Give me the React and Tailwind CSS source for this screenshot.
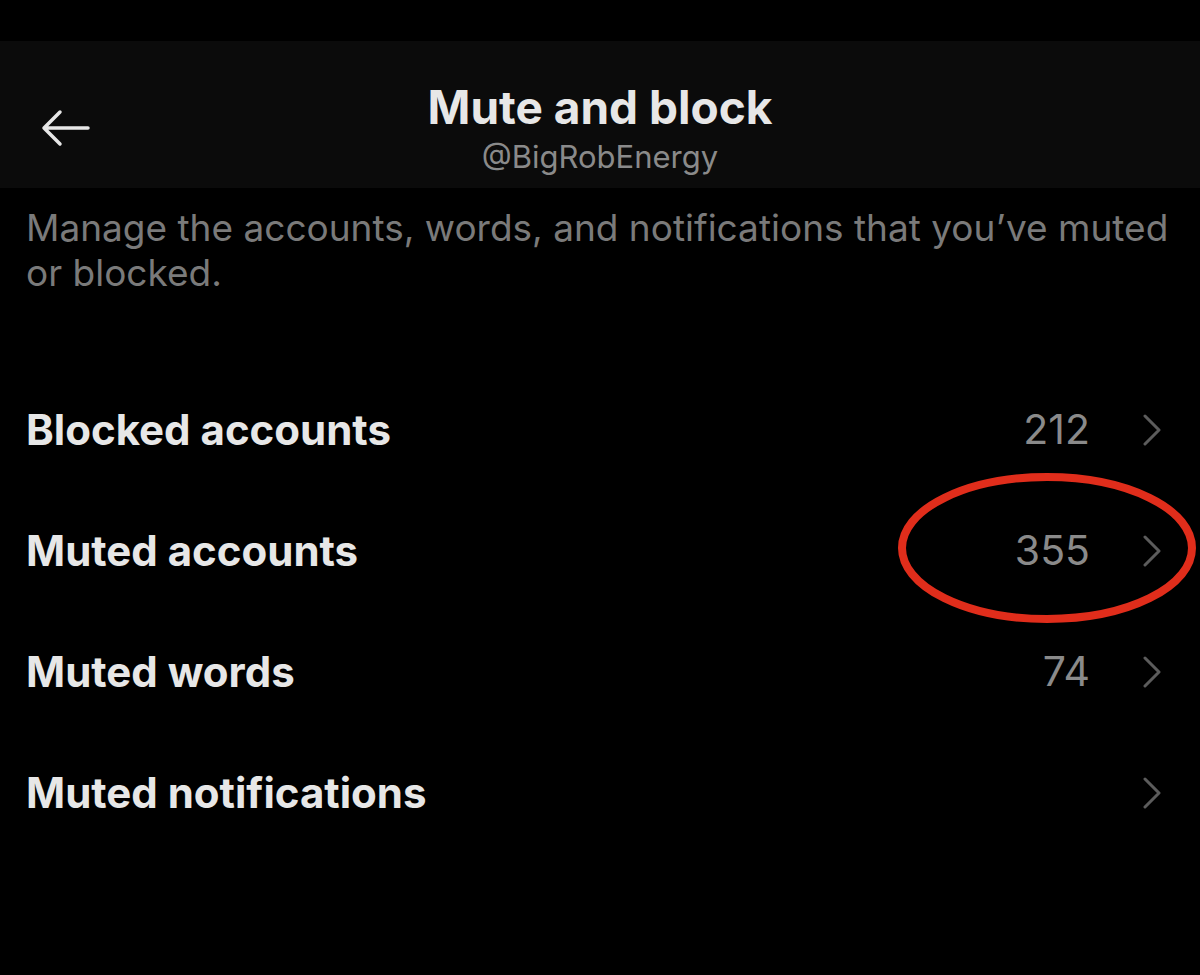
import { useState } from 'react';

const ROWS = [
  { label: 'Blocked accounts', count: '212' },
  { label: 'Muted accounts', count: '355', circled: true },
  { label: 'Muted words', count: '74' },
  { label: 'Muted notifications', count: '' },
];

function Chevron() {
  return (
    <svg width="20" height="32" viewBox="0 0 20 32" fill="none">
      <path d="M3 2 L17 16 L3 30" stroke="#5c5c5c" strokeWidth="3" strokeLinecap="round" strokeLinejoin="round" />
    </svg>
  );
}

function BackArrow() {
  return (
    <svg width="52" height="40" viewBox="0 0 52 40" fill="none">
      <path d="M48 20 H4 M20 4 L4 20 L20 36" stroke="#e7e7e7" strokeWidth="3.5" strokeLinecap="round" strokeLinejoin="round" />
    </svg>
  );
}

export default function App() {
  const [active, setActive] = useState(null);

  return (
    <div className="min-h-[975px] w-[1200px] bg-black text-[#e7e7e7] font-['Inter',sans-serif] overflow-hidden">
      <div className="h-[41px] bg-black" />
      <header className="relative h-[147px] bg-[#0b0b0b] flex flex-col items-center">
        <button className="absolute left-[40px] top-[67px]">
          <BackArrow />
        </button>
        <h1 className="mt-[40px] text-[46px] leading-[52px] font-bold">Mute and block</h1>
        <div className="mt-[6px] text-[31px] leading-[36px] text-[#8a8a8a]">@BigRobEnergy</div>
      </header>

      <p className="pt-[17px] pl-[26px] pr-[24px] text-[37px] leading-[45px] text-[#7a7a7a]">
        Manage the accounts, words, and notifications that you’ve muted or blocked.
      </p>

      <div className="mt-[74px]">
        {ROWS.map((row, i) => (
          <div
            key={row.label}
            onClick={() => setActive(i)}
            className={`relative h-[121px] flex items-center pl-[26px] pr-[38px] ${active === i ? 'bg-[#0b0b0b]' : ''}`}
          >
            <span className="flex-1 text-[42px] font-bold">{row.label}</span>
            {row.count && <span className="text-[41px] text-[#8a8a8a] mr-[52px]">{row.count}</span>}
            <Chevron />
            {row.circled && (
              <svg className="absolute left-[898px] top-[-17px]" width="298" height="150" viewBox="0 0 298 150" fill="none">
                <ellipse cx="149" cy="75" rx="145" ry="71" stroke="#e02d1b" strokeWidth="8" />
              </svg>
            )}
          </div>
        ))}
      </div>
    </div>
  );
}
